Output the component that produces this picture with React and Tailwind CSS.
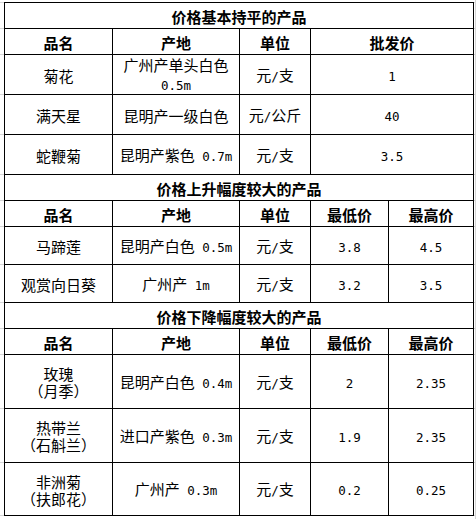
import clsx from 'clsx';

// split text so ASCII runs render in a half-width mono face like the sheet's SimSun digits
function Txt({ s }) {
  return s.split(/([\x20-\x7e]+)/).map((p, i) =>
    /[\x20-\x7e]/.test(p) ? (
      <span key={i} className="font-['DejaVu_Sans_Mono',monospace] text-[12.5px]">{p}</span>
    ) : (
      p
    )
  );
}

function Cell({ children, className, bold }) {
  return (
    <div
      className={clsx(
        'flex items-center justify-center text-center border-r border-b border-black pt-[1px]',
        bold && 'font-bold',
        className
      )}
    >
      <div className="whitespace-nowrap">{children}</div>
    </div>
  );
}

function Lines({ rows, lead }) {
  return (
    <div className={clsx('flex flex-col items-center', lead)}>
      {rows.map((r, i) => (
        <div key={i}><Txt s={r} /></div>
      ))}
    </div>
  );
}

const gutter = [
  'h-[26px]', 'h-[26px]', 'h-[40px]', 'h-[40px]', 'h-[40px]',
  'h-[26px]', 'h-[26px]', 'h-[38px]', 'h-[38px]',
  'h-[26px]', 'h-[26px]', 'h-[54px]', 'h-[54px]', 'h-[53px]',
];

function Gutter({ className }) {
  return (
    <div className={clsx('flex flex-col pt-[2px]', className)}>
      <div className="border-t border-[#d4d4d4]" />
      {gutter.map((h, i) => (
        <div key={i} className={clsx(h, 'border-b border-[#d4d4d4] shrink-0')} />
      ))}
    </div>
  );
}

export default function App() {
  return (
    <div className="flex w-[476px] h-[519px] bg-white text-black text-[15px] leading-[19px] font-['Noto_Sans_CJK_SC',sans-serif] overflow-hidden">
      <Gutter className="w-[4px]" />
      <div className="mt-[2px] self-start">
        <div className="grid grid-cols-[108px_127px_71px_78px_85px] grid-rows-[26px_26px_40px_40px_40px_26px_26px_38px_38px_26px_26px_54px_54px_53px] border-l border-t border-black">
          {/* 价格基本持平 */}
          <Cell bold className="col-span-5">价格基本持平的产品</Cell>
          <Cell bold>品名</Cell>
          <Cell bold>产地</Cell>
          <Cell bold>单位</Cell>
          <Cell bold className="col-span-2">批发价</Cell>

          <Cell>菊花</Cell>
          <Cell><Lines rows={['广州产单头白色', '0.5m']} lead="leading-[19px]" /></Cell>
          <Cell><Txt s="元/支" /></Cell>
          <Cell className="col-span-2"><Txt s="1" /></Cell>

          <Cell>满天星</Cell>
          <Cell>昆明产一级白色</Cell>
          <Cell><Txt s="元/公斤" /></Cell>
          <Cell className="col-span-2"><Txt s="40" /></Cell>

          <Cell>蛇鞭菊</Cell>
          <Cell><Txt s="昆明产紫色 0.7m" /></Cell>
          <Cell><Txt s="元/支" /></Cell>
          <Cell className="col-span-2"><Txt s="3.5" /></Cell>

          {/* 价格上升 */}
          <Cell bold className="col-span-5">价格上升幅度较大的产品</Cell>
          <Cell bold>品名</Cell>
          <Cell bold>产地</Cell>
          <Cell bold>单位</Cell>
          <Cell bold>最低价</Cell>
          <Cell bold>最高价</Cell>

          <Cell>马蹄莲</Cell>
          <Cell><Txt s="昆明产白色 0.5m" /></Cell>
          <Cell><Txt s="元/支" /></Cell>
          <Cell><Txt s="3.8" /></Cell>
          <Cell><Txt s="4.5" /></Cell>

          <Cell>观赏向日葵</Cell>
          <Cell><Txt s="广州产 1m" /></Cell>
          <Cell><Txt s="元/支" /></Cell>
          <Cell><Txt s="3.2" /></Cell>
          <Cell><Txt s="3.5" /></Cell>

          {/* 价格下降 */}
          <Cell bold className="col-span-5">价格下降幅度较大的产品</Cell>
          <Cell bold>品名</Cell>
          <Cell bold>产地</Cell>
          <Cell bold>单位</Cell>
          <Cell bold>最低价</Cell>
          <Cell bold>最高价</Cell>

          <Cell><Lines rows={['玫瑰', '（月季）']} lead="leading-[17px]" /></Cell>
          <Cell><Txt s="昆明产白色 0.4m" /></Cell>
          <Cell><Txt s="元/支" /></Cell>
          <Cell><Txt s="2" /></Cell>
          <Cell><Txt s="2.35" /></Cell>

          <Cell><Lines rows={['热带兰', '（石斛兰）']} lead="leading-[17px]" /></Cell>
          <Cell><Txt s="进口产紫色 0.3m" /></Cell>
          <Cell><Txt s="元/支" /></Cell>
          <Cell><Txt s="1.9" /></Cell>
          <Cell><Txt s="2.35" /></Cell>

          <Cell><Lines rows={['非洲菊', '（扶郎花）']} lead="leading-[17px]" /></Cell>
          <Cell><Txt s="广州产 0.3m" /></Cell>
          <Cell><Txt s="元/支" /></Cell>
          <Cell><Txt s="0.2" /></Cell>
          <Cell><Txt s="0.25" /></Cell>
        </div>
      </div>
      <Gutter className="w-[2px] border-r border-[#d4d4d4]" />
    </div>
  );
}
